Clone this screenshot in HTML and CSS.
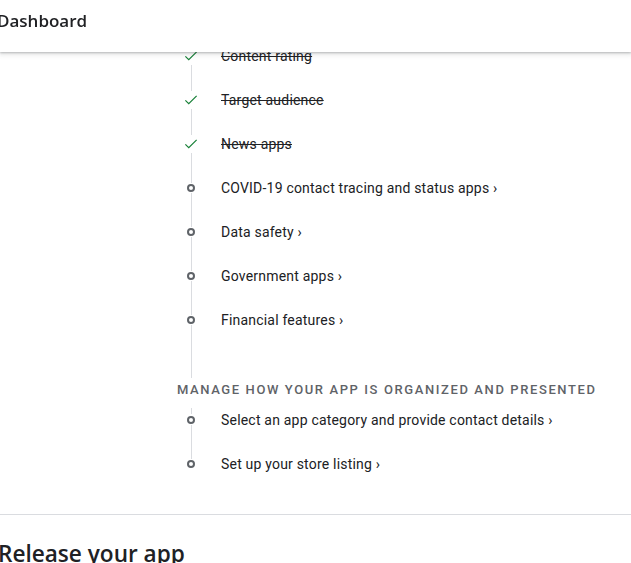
FILE: index.html
```html
<!DOCTYPE html>
<html>
<head>
<meta charset="utf-8">
<link rel="stylesheet" href="styles.css">
</head>
<body>
<header class="topbar">
  <h1 class="topbar-title">Dashboard</h1>
</header>
<main class="page">
  <ol class="steps">
    <li class="step done"><span class="marker"><svg class="check" viewBox="0 0 24 24" width="18" height="18"><path d="M4.5 12.5l4.5 4.5 10.5-10.5" fill="none" stroke="#188038" stroke-width="1.6"/></svg></span><span class="label">Content rating</span></li>
    <li class="step done"><span class="marker"><svg class="check" viewBox="0 0 24 24" width="18" height="18"><path d="M4.5 12.5l4.5 4.5 10.5-10.5" fill="none" stroke="#188038" stroke-width="1.6"/></svg></span><span class="label">Target audience</span></li>
    <li class="step done"><span class="marker"><svg class="check" viewBox="0 0 24 24" width="18" height="18"><path d="M4.5 12.5l4.5 4.5 10.5-10.5" fill="none" stroke="#188038" stroke-width="1.6"/></svg></span><span class="label">News apps</span></li>
    <li class="step"><span class="marker"><span class="dot"></span></span><span class="label">COVID-19 contact tracing and status apps <span class="chev">›</span></span></li>
    <li class="step"><span class="marker"><span class="dot"></span></span><span class="label">Data safety <span class="chev">›</span></span></li>
    <li class="step"><span class="marker"><span class="dot"></span></span><span class="label">Government apps <span class="chev">›</span></span></li>
    <li class="step"><span class="marker"><span class="dot"></span></span><span class="label">Financial features <span class="chev">›</span></span></li>
  </ol>
  <div class="tail"></div>
  <h2 class="section-title">MANAGE HOW YOUR APP IS ORGANIZED AND PRESENTED</h2>
  <ol class="steps steps-second">
    <li class="step first"><span class="marker"><span class="dot"></span></span><span class="label">Select an app category and provide contact details <span class="chev">›</span></span></li>
    <li class="step last"><span class="marker"><span class="dot"></span></span><span class="label">Set up your store listing <span class="chev">›</span></span></li>
  </ol>
  <hr class="divider">
  <h2 class="release">Release your app</h2>
</main>
</body>
</html>
```

FILE: styles.css
```css
html, body {
  margin: 0;
  padding: 0;
  background: #ffffff;
  overflow: hidden;
}
body {
  font-family: Roboto, "Liberation Sans", Arial, sans-serif;
  color: #202124;
}
.topbar {
  position: fixed;
  top: 0;
  left: 0;
  right: 0;
  height: 52px;
  background: #ffffff;
  box-shadow: 0 1px 2px rgba(60,64,67,0.3), 0 2px 5px 1px rgba(60,64,67,0.12);
  z-index: 10;
  display: flex;
  align-items: center;
}
.topbar-title {
  margin: 0 0 0 -3px;
  font-family: "Open Sans", Roboto, sans-serif;
  font-weight: 600;
  font-size: 17px;
  letter-spacing: 0;
  color: #202124;
  padding-bottom: 12px;
}
.page {
  padding-top: 34px;
}
.steps {
  list-style: none;
  margin: 0;
  padding: 0 0 0 179px;
}
.step {
  display: flex;
  align-items: center;
  height: 44px;
}
.marker {
  position: relative;
  width: 24px;
  height: 44px;
  display: flex;
  align-items: center;
  justify-content: center;
  flex: none;
  margin-right: 18px;
}
.marker::before, .marker::after {
  content: "";
  position: absolute;
  left: 12px;
  width: 1px;
  background: #dadce0;
}
.step .marker::before {
  top: 0;
  height: 13px;
}
.step .marker::after {
  bottom: 0;
  height: 13px;
}
.steps .step:not(.done) .marker::before,
.steps .step:not(.done) .marker::after {
  height: 17px;
}
.check {
  display: block;
}
.dot {
  width: 4px;
  height: 4px;
  border: 2px solid #5f6368;
  border-radius: 50%;
}
.label {
  font-size: 14px;
  letter-spacing: 0.2px;
  line-height: 20px;
  color: #202124;
}
.done .label {
  text-decoration: line-through;
}
.chev {
  font-size: 14px;
}
.tail {
  margin-left: 191px;
  width: 1px;
  height: 36px;
  background: #dadce0;
}
.section-title {
  margin: 0 0 0 177px;
  height: 24px;
  line-height: 24px;
  font-size: 13px;
  font-weight: 500;
  letter-spacing: 1.6px;
  color: #5f6368;
}
.steps-second {
  margin-top: -4px;
}
.steps.steps-second .step.first .marker::before {
  top: 10px;
  height: 6px;
}
.steps.steps-second .step.last .marker::after {
  display: none;
}
.divider {
  margin: 28px 0 0 0;
  border: 0;
  height: 1px;
  background: #dadce0;
}
.release {
  margin: 25px 0 0 -2px;
  font-family: "Open Sans", Roboto, sans-serif;
  font-weight: 600;
  font-size: 22.6px;
  line-height: 28px;
  color: #202124;
}
```
